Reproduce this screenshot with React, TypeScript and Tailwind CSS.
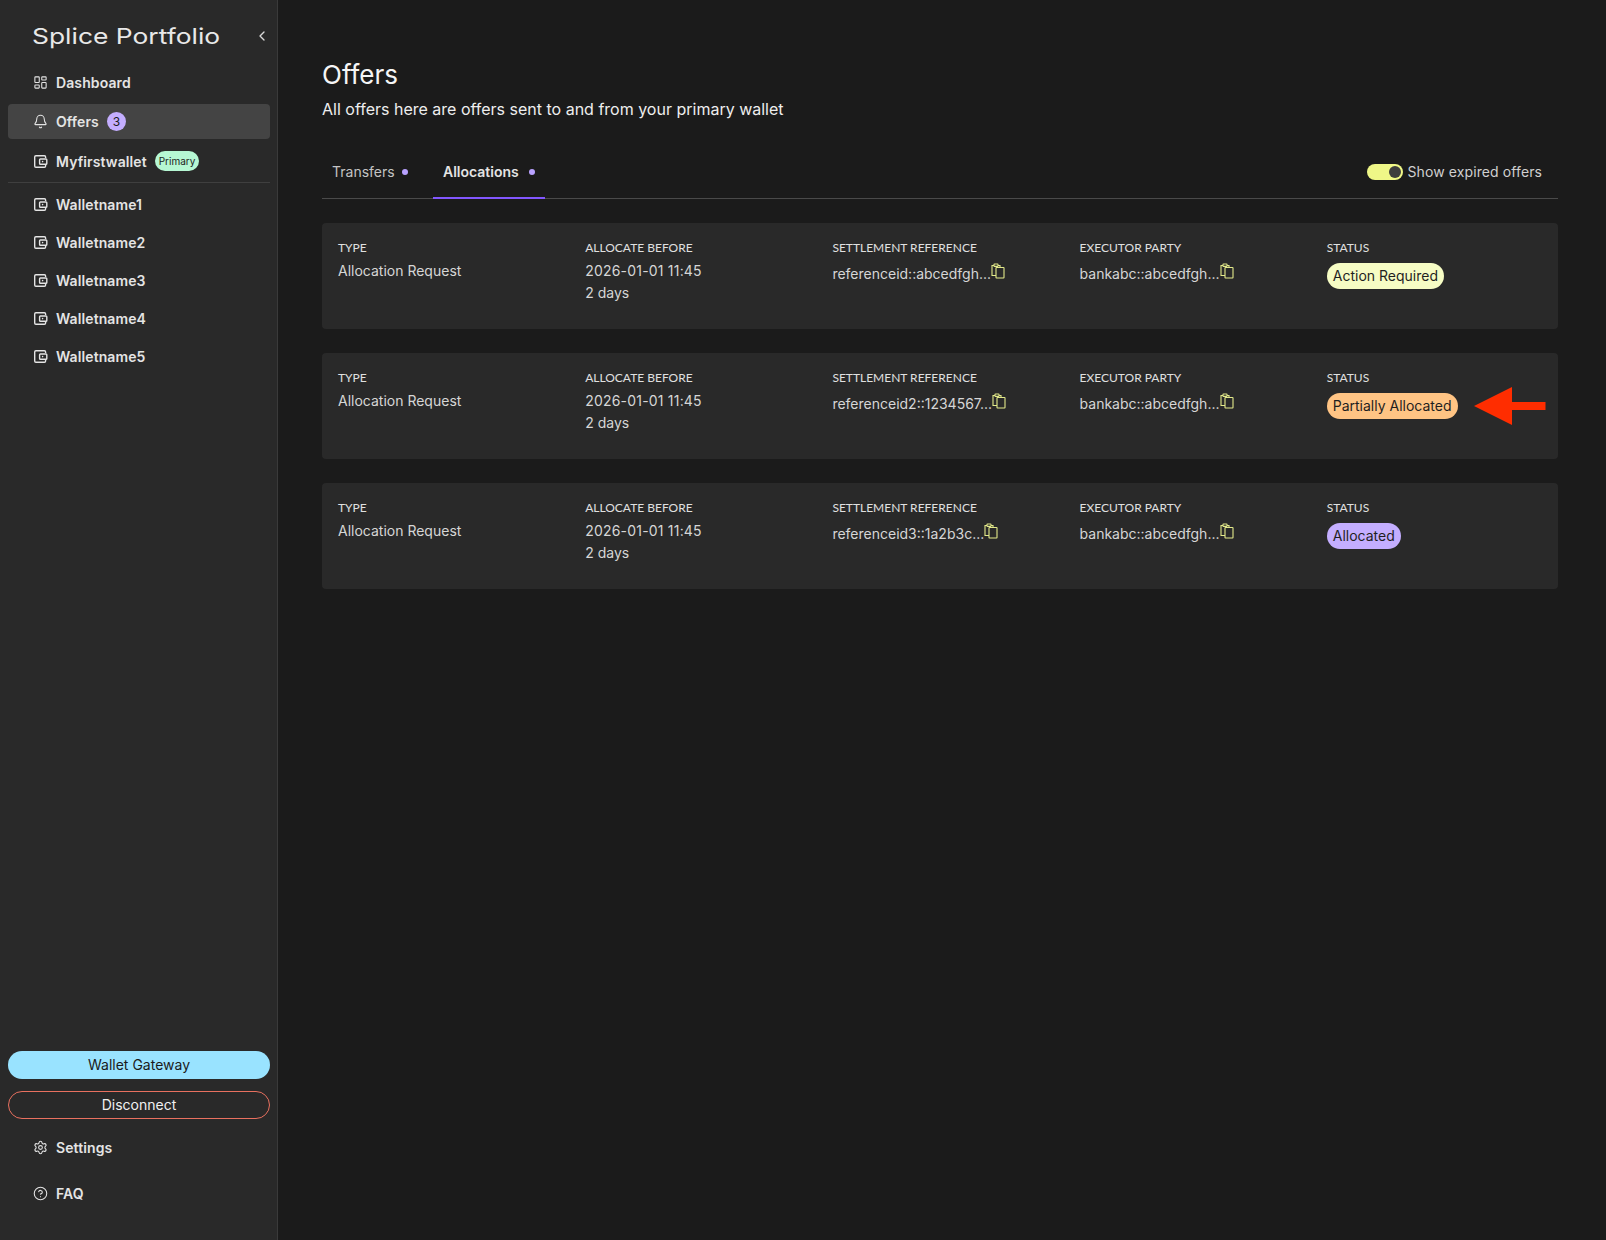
import { Bell, ChevronLeft, CircleHelp, LayoutDashboard, Settings } from "lucide-react"

const INTER = { fontFamily: "Inter, sans-serif" }

function WalletIcon() {
    return (
        <svg width="15" height="15" viewBox="0 0 15 15" fill="none" stroke="currentColor" strokeWidth="1.4" className="shrink-0">
            <path d="M12.6 4V2.9c0-.7-.5-1.2-1.2-1.2H2.9c-.7 0-1.2.5-1.2 1.2v9.2c0 .7.5 1.2 1.2 1.2h8.5c.7 0 1.2-.5 1.2-1.2V11" />
            <rect x="6.6" y="5" width="7.2" height="5.2" rx="0.8" />
            <circle cx="9.6" cy="7.6" r="0.8" fill="currentColor" stroke="none" />
        </svg>
    )
}

function CopyIcon() {
    return (
        <svg width="14" height="16" viewBox="0 0 14 16" fill="none" stroke="#e3ea8a" strokeWidth="1.1" className="shrink-0">
            <path d="M5 12.5H1V2.5h2" />
            <path d="M7 2.5h2V4" />
            <rect x="3" y="1" width="4" height="2.4" rx="0.5" />
            <rect x="5" y="4.5" width="8" height="10.5" rx="0.5" />
        </svg>
    )
}

function NavRow({ icon, label, active, extra, tall }: { icon: React.ReactNode; label: string; active?: boolean; extra?: React.ReactNode; tall?: boolean }) {
    return (
        <div className={`flex items-center gap-[8px] rounded-[4px] pl-[25px] text-[#e4e4e4] ${tall ? "h-[38px]" : "h-[35px]"} ${active ? "bg-[#444444]" : ""}`}>
            <span className="flex w-[15px] justify-center text-[#e4e4e4]">{icon}</span>
            <span className="text-[14px] font-semibold tracking-[0.1px]">{label}</span>
            {extra}
        </div>
    )
}

function Sidebar() {
    return (
        <aside className="flex h-[1240px] w-[278px] shrink-0 flex-col border-r border-[#3a3a3a] bg-[#292929] pl-2 pr-[7px]">
            <div className="flex h-[65px] items-start justify-between pt-[22px]">
                <span className="ml-[24px] origin-left scale-x-[1.2] text-[22px] leading-[28px] font-normal text-[#e8e8e8]">
                    Splice Portfolio
                </span>
                <ChevronLeft size={16} strokeWidth={2} className="mt-[6px] text-[#d8d8d8]" />
            </div>
            <div className="flex flex-col">
                <NavRow icon={<LayoutDashboard size={15} strokeWidth={1.7} />} label="Dashboard" />
                <div className="mt-[4px]">
                    <NavRow
                        active
                        icon={<Bell size={15} strokeWidth={1.7} />}
                        label="Offers"
                        extra={
                            <span className="flex h-[19px] w-[19px] items-center justify-center rounded-full bg-[#c4aeff] text-[12px] text-[#1c1c1c]">3</span>
                        }
                    />
                </div>
                <div className="mt-[3px]">
                    <NavRow
                        tall
                        icon={<WalletIcon />}
                        label="Myfirstwallet"
                        extra={
                            <span className="flex h-[20px] items-center rounded-full bg-[#b6f7d3] px-[4px] text-[10px] text-[#1c1c1c]">Primary</span>
                        }
                    />
                </div>
            </div>
            <div className="mb-[3.5px] mt-[2px] h-px bg-[#3f3f3f]" />
            <div className="flex flex-col gap-[3px]">
                {["Walletname1", "Walletname2", "Walletname3", "Walletname4", "Walletname5"].map((name) => (
                    <NavRow key={name} icon={<WalletIcon />} label={name} />
                ))}
            </div>
            <div className="mt-auto flex flex-col gap-[12px]">
                <button className="h-[28px] rounded-full bg-[#99e3ff] pb-px text-[14px] text-[#1b1b1b]">Wallet Gateway</button>
                <button className="h-[28px] rounded-full border border-[#e8705f] pb-px text-[14px] text-[#f0f0f0]">Disconnect</button>
            </div>
            <div className="mb-[24px] mt-[5px] flex flex-col">
                <div className="flex h-[46px] items-center gap-[8px] pl-[25px] text-[#e4e4e4]">
                    <Settings size={15} strokeWidth={1.7} />
                    <span className="text-[14px] font-semibold tracking-[0.1px]">Settings</span>
                </div>
                <div className="flex h-[46px] items-center gap-[8px] pl-[25px] text-[#e4e4e4]">
                    <CircleHelp size={15} strokeWidth={1.7} />
                    <span className="text-[14px] font-semibold tracking-[0.1px]">FAQ</span>
                </div>
            </div>
        </aside>
    )
}

function Label({ children }: { children: React.ReactNode }) {
    return <div className="h-[17px] text-[12px] leading-[17px] text-[#e0e0e0]" style={{ fontFamily: "Lato, sans-serif" }}>{children}</div>
}

function Card({ reference, status, pill, arrow }: { reference: string; status: string; pill: string; arrow?: boolean }) {
    return (
        <div className="relative grid h-[106px] grid-cols-[repeat(4,247.2px)_1fr] rounded-[4px] bg-[#292929] pl-4 pt-[16px] text-[14px] leading-[22px] text-[#d6d6d6]">
            <div>
                <Label>TYPE</Label>
                <div className="mt-[4px]">Allocation Request</div>
            </div>
            <div>
                <Label>ALLOCATE BEFORE</Label>
                <div className="mt-[4px] tracking-[0.2px]">2026-01-01 11:45</div>
                <div>2 days</div>
            </div>
            <div>
                <Label>SETTLEMENT REFERENCE</Label>
                <div className="mt-[7px] flex items-start">
                    <span>{reference}</span>
                    <CopyIcon />
                </div>
            </div>
            <div>
                <Label>EXECUTOR PARTY</Label>
                <div className="mt-[7px] flex items-start">
                    <span>bankabc::abcedfgh...</span>
                    <CopyIcon />
                </div>
            </div>
            <div>
                <Label>STATUS</Label>
                <span className={`mt-[7px] inline-flex h-[26px] items-center rounded-full px-[6px] text-[14px] text-[#1f1f1f] ${pill}`}>{status}</span>
            </div>
            {arrow && (
                <svg width="72" height="38" viewBox="0 0 72 38" className="absolute left-[1152px] top-[34px]">
                    <path d="M0 19 38 0V15H71.5V23H38V38Z" fill="#ff2d00" />
                </svg>
            )}
        </div>
    )
}

export default function App() {
    return (
        <div className="flex h-[1240px] w-[1606px] overflow-hidden bg-[#1b1b1b]" style={INTER}>
            <Sidebar />
            <main className="min-w-0 flex-1 pl-[44px] pr-[48px]">
                <h1 className="mt-[59px] text-[26px] leading-[32px] text-[#f5f5f5]">Offers</h1>
                <p className="mt-[6px] text-[16px] leading-[24px] text-[#eeeeee]">All offers here are offers sent to and from your primary wallet</p>
                <div className="mt-[26px] flex h-[52px] items-stretch border-b border-[#4a4a4a]">
                    <div className="flex w-[111px] items-center pb-[2px] pl-[10px] text-[14px] text-[#c4c4c4]">
                        Transfers
                        <span className="ml-[7px] h-[6px] w-[6px] rounded-full bg-[#b9a2ff]" />
                    </div>
                    <div className="-mb-px flex w-[112px] items-center border-b-2 border-[#8257ff] pb-[1px] pl-[10px] text-[14px] font-semibold text-[#e4e4e4]">
                        Allocations
                        <span className="ml-[10px] h-[6px] w-[6px] rounded-full bg-[#b9a2ff]" />
                    </div>
                    <div className="ml-auto flex items-center gap-[5px] pb-[2px] pr-[16px] text-[14px] tracking-[0.1px] text-[#d0d0d0]">
                        <span className="flex h-[16px] w-[36px] items-center justify-end rounded-full bg-[#eff787] pr-[2px]">
                            <span className="h-[12px] w-[12px] rounded-full bg-[#3d3d3d]" />
                        </span>
                        Show expired offers
                    </div>
                </div>
                <div className="mt-[24px] flex flex-col gap-[24px]">
                    <Card reference="referenceid::abcedfgh..." status="Action Required" pill="bg-[#f6fcc4]" />
                    <Card reference="referenceid2::1234567..." status="Partially Allocated" pill="bg-[#ffc484]" arrow />
                    <Card reference="referenceid3::1a2b3c..." status="Allocated" pill="bg-[#c4aeff]" />
                </div>
            </main>
        </div>
    )
}
